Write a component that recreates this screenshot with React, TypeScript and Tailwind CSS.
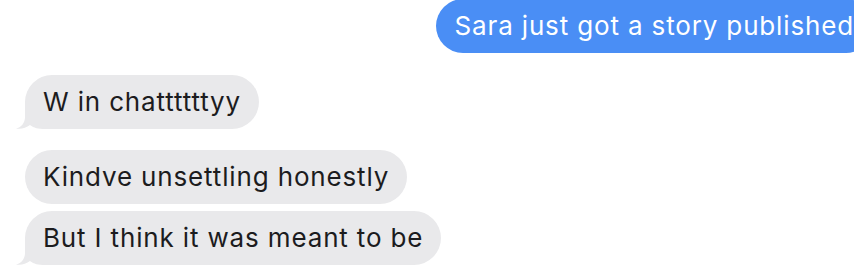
import React from "react";

type BubbleProps = {
  text: string;
  tail?: boolean;
};

const Tail = () => (
  <svg
    className="absolute left-[-9px] bottom-0"
    width="36"
    height="28"
    viewBox="-9 -28 36 28"
  >
    <path
      d="M0 -28 L0 -12 C0 -6 -4 -1.5 -9 -0.5 C-4 0.5 1 -1 5 -4 C9 -1 13 0 20 0 L27 0 L27 -28 Z"
      fill="#e9e9eb"
    />
  </svg>
);

const Received: React.FC<BubbleProps> = ({ text, tail }) => (
  <div className="relative flex h-[54px] items-center rounded-[27px] bg-[#e9e9eb] pl-[18px] pr-[18px] text-[#1c1c1e]">
    {tail && <Tail />}
    <span className="relative whitespace-nowrap">{text}</span>
  </div>
);

export default function App() {
  return (
    <div className="h-[272px] w-[854px] overflow-hidden bg-white font-['Inter',sans-serif] text-[26px] leading-none tracking-[0.85px] antialiased">
      {/* Sent message, runs off the right edge */}
      <div className="-mr-[19px] -mt-px flex justify-end">
        <div className="flex h-[54px] items-center rounded-[27px] bg-[#4a8ef5] px-[19px] text-white">
          <span className="whitespace-nowrap">Sara just got a story published</span>
        </div>
      </div>

      {/* Received messages */}
      <div className="flex flex-col items-start pl-[25px]">
        <div className="mt-[22px]">
          <Received text="W in chattttttyy" tail />
        </div>
        <div className="mt-[21px]">
          <Received text="Kindve unsettling honestly" />
        </div>
        <div className="mt-[7px]">
          <Received text="But I think it was meant to be" tail />
        </div>
      </div>
    </div>
  );
}
